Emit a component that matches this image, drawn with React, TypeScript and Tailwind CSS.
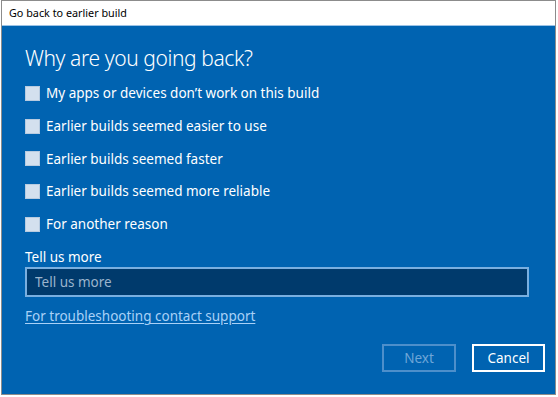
import { useState } from "react"

const reasons = [
  "My apps or devices don\u2019t work on this build",
  "Earlier builds seemed easier to use",
  "Earlier builds seemed faster",
  "Earlier builds seemed more reliable",
  "For another reason",
]

export default function App() {
  const [checked, setChecked] = useState<Set<number>>(new Set())
  const [text, setText] = useState("")

  const toggle = (i: number) => {
    const next = new Set(checked)
    if (next.has(i)) next.delete(i)
    else next.add(i)
    setChecked(next)
  }

  return (
    <div
      className="w-[558px] h-[397px] bg-white"
      style={{ fontFamily: '"Noto Sans", "Open Sans", sans-serif' }}
    >
      <div className="ml-[1px] w-[555px] h-[395px] border border-[#8c8c8c] flex flex-col">
        {/* Title bar */}
        <div className="h-[25px] bg-white border-b border-[#9cc3e6] flex items-center px-[7px] pt-[1px] text-[10.8px] text-black">
          Go back to earlier build
        </div>

        {/* Body */}
        <div className="flex-1 bg-[#0063b1] text-white pl-[23px] pr-[10px] flex flex-col">
          <h1 className="mt-[18px] text-[21px] tracking-[-0.4px] font-light leading-[28px]">Why are you going back?</h1>

          <div className="mt-[5px] flex flex-col">
            {reasons.map((r, i) => (
              <label
                key={i}
                className="h-[32.7px] flex items-center gap-[6px] text-[13.5px] cursor-pointer"
                onClick={() => toggle(i)}
              >
                <span className="w-[15px] h-[15px] bg-[#d3e0ee] border border-[#b7cbe0] flex items-center justify-center">
                  {checked.has(i) && (
                    <svg viewBox="0 0 12 12" className="w-[11px] h-[11px]">
                      <path d="M2 6.5l2.5 2.5L10 3" fill="none" stroke="#0063b1" strokeWidth="1.8" />
                    </svg>
                  )}
                </span>
                {r}
              </label>
            ))}
          </div>

          <div className="mt-[8px] text-[13.5px] leading-[19px]">Tell us more</div>
          <input
            value={text}
            onChange={(e) => setText(e.target.value)}
            placeholder="Tell us more"
            className="w-[504px] h-[30px] bg-[#003a6c] border-2 border-[#79afe0] px-[8px] text-[13.5px] text-white placeholder:text-[#9bb4cc] outline-none"
          />

          <a href="#" className="mt-[9px] text-[13.5px] text-[#a9d1f7] underline underline-offset-2 self-start leading-[20px]">
            For troubleshooting contact support
          </a>

          <div className="mt-auto mb-[22px] flex justify-end gap-[16px]">
            <button
              disabled
              className="w-[74px] h-[28px] border-2 border-[#4d8fcb] text-[#6ea6d8] text-[13.5px]"
            >
              Next
            </button>
            <button className="w-[73px] h-[28px] border-2 border-white text-white text-[13.5px]">
              Cancel
            </button>
          </div>
        </div>
      </div>
    </div>
  )
}
